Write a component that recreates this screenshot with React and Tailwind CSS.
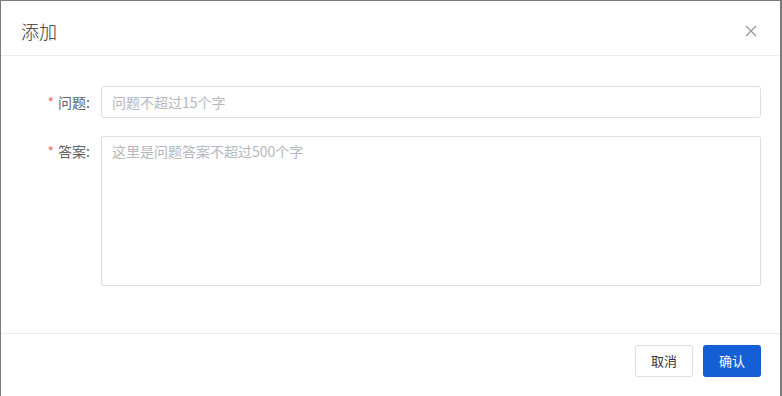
import React, { useState } from 'react';

const font = { fontFamily: '"Noto Sans CJK SC", "Noto Sans", sans-serif' };

export default function App() {
  const [question, setQuestion] = useState('');
  const [answer, setAnswer] = useState('');

  return (
    <div className="w-[782px] h-[396px] bg-white overflow-hidden" style={font}>
      <div className="w-full h-full flex flex-col border-l-[1.5px] border-r-2 border-t border-[#7a7a7a]">
        {/* header */}
        <div className="h-[55px] shrink-0 flex items-center justify-between pl-[20px] pr-[21px] pt-[5px] border-b border-[#ebebeb]">
          <h2 className="text-[18px] font-light text-[#303133] leading-none">添加</h2>
          <button className="w-4 h-4 flex items-center justify-center text-[#909399]">
            <svg width="12" height="12" viewBox="0 0 12 12" fill="none" stroke="currentColor" strokeWidth="1.2">
              <path d="M1 1L11 11M11 1L1 11" />
            </svg>
          </button>
        </div>

        {/* body */}
        <div className="flex-1 pt-[30px] pr-[19px] flex flex-col gap-[18px]">
          <div className="flex items-center">
            <label className="w-[100px] shrink-0 pr-[11px] text-right text-[14px] text-[#606266]">
              <span className="text-[#f56c6c] mr-1">*</span>问题:
            </label>
            <input
              value={question}
              onChange={(e) => setQuestion(e.target.value)}
              placeholder="问题不超过15个字"
              className="flex-1 h-[32px] rounded-[3px] border border-[#dcdfe6] px-[10px] text-[14px] text-[#606266] placeholder:text-[#b4b7bd] outline-none"
            />
          </div>
          <div className="flex items-start">
            <label className="w-[100px] shrink-0 pr-[11px] pt-[5px] text-right text-[14px] text-[#606266]">
              <span className="text-[#f56c6c] mr-1">*</span>答案:
            </label>
            <textarea
              value={answer}
              onChange={(e) => setAnswer(e.target.value)}
              placeholder="这里是问题答案不超过500个字"
              className="flex-1 h-[150px] resize-none rounded-[2px] border border-[#dcdfe6] px-[10px] py-[4px] text-[14px] text-[#606266] placeholder:text-[#b4b7bd] outline-none"
            />
          </div>
        </div>

        {/* footer */}
        <div className="h-[63px] shrink-0 border-t border-[#ebebeb] flex items-start justify-end gap-[10px] pt-[11px] pr-[19px]">
          <button className="w-[58px] h-[32px] rounded-[3px] border border-[#dcdfe6] bg-white text-[13px] text-[#333]">
            取消
          </button>
          <button className="w-[58px] h-[32px] rounded-[3px] bg-[#145ed6] text-[13px] text-white">
            确认
          </button>
        </div>
      </div>
    </div>
  );
}
